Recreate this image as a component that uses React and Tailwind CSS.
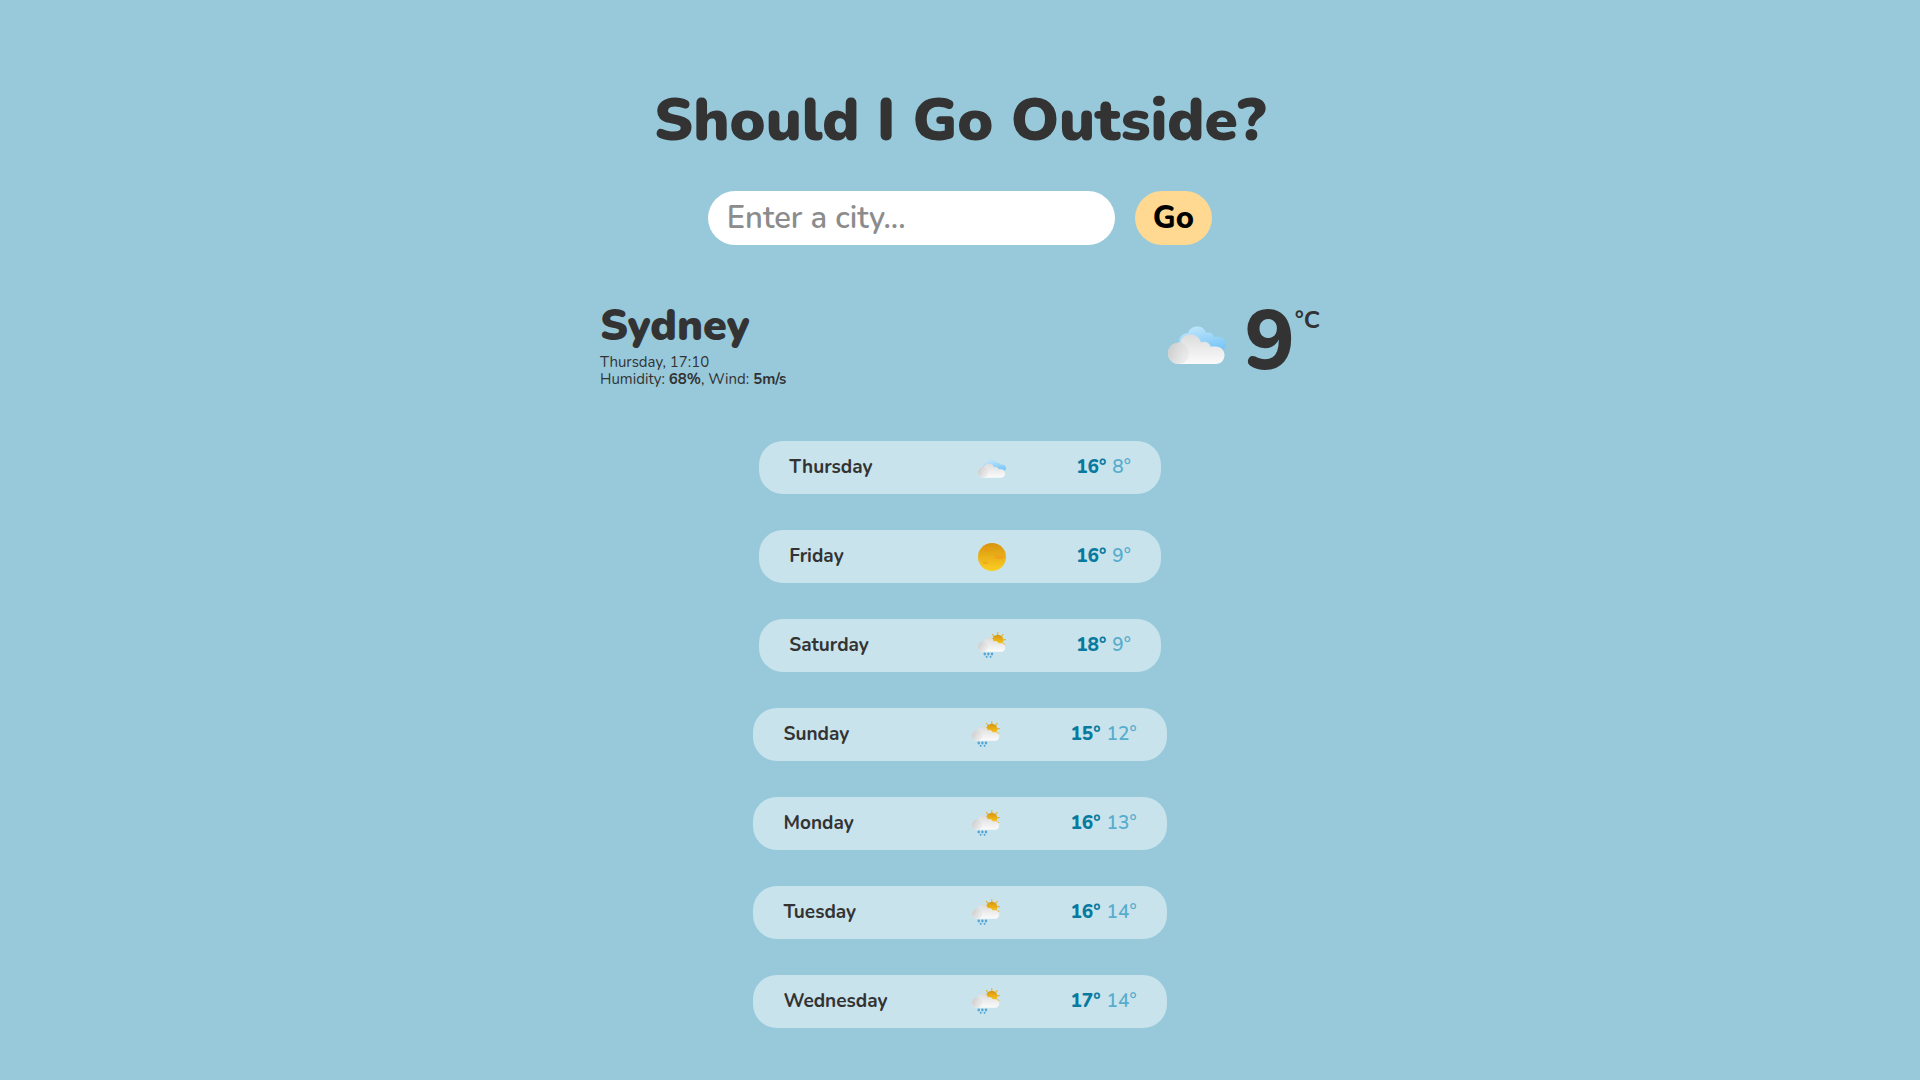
import React from "react";

const forecast = [
  { day: "Thursday", icon: "cloudy", high: 16, low: 8 },
  { day: "Friday", icon: "sunny", high: 16, low: 9 },
  { day: "Saturday", icon: "showers", high: 18, low: 9 },
  { day: "Sunday", icon: "showers", high: 15, low: 12 },
  { day: "Monday", icon: "showers", high: 16, low: 13 },
  { day: "Tuesday", icon: "showers", high: 16, low: 14 },
  { day: "Wednesday", icon: "showers", high: 17, low: 14 },
];

function Gradients() {
  return (
    <svg className="absolute size-0" aria-hidden="true">
      <defs>
        <linearGradient id="cloud" x1="0" y1="0" x2="0" y2="1">
          <stop offset="0" stopColor="#dcdcdc" />
          <stop offset="1" stopColor="#fbfbfb" />
        </linearGradient>
        <linearGradient id="puff" x1="0" y1="0.3" x2="1" y2="0.6">
          <stop offset="0" stopColor="#cccccc" />
          <stop offset="1" stopColor="#e2e2e2" stopOpacity="0.4" />
        </linearGradient>
        <linearGradient id="backCloud" x1="0.3" y1="0" x2="0.7" y2="1">
          <stop offset="0" stopColor="#bfe5fb" />
          <stop offset="1" stopColor="#72c3f7" />
        </linearGradient>
        <linearGradient id="sun" x1="0" y1="0" x2="0" y2="1">
          <stop offset="0" stopColor="#d8940f" />
          <stop offset="1" stopColor="#fccf23" />
        </linearGradient>
      </defs>
    </svg>
  );
}

function FrontCloud() {
  return (
    <>
      <path
        d="M11 57C4.500 57 0 52 0 46.500C0 40 5 35.500 12.500 35.500C13 31 17 27.500 22.500 27.500C28 27.500 31.500 31 33 35.500C37 33.500 41.500 35.500 42.500 39.500H48C53 39.500 56.500 43.500 56.500 48C56.500 53 53 57 48 57Z"
        fill="url(#cloud)"
      />
      <path
        d="M11 57C4.500 57 0 52 0 46.500C0 40 5 35.500 11 35.500C17 35.500 21 40.500 21 46.500C21 52 17 57 11 57Z"
        fill="url(#puff)"
      />
    </>
  );
}

function WeatherIcon({ kind, className }) {
  if (kind === "sunny") {
    return (
      <svg viewBox="0 0 58 58" className={className} role="img" aria-label="Sunny">
        <circle cx="29" cy="29" r="29" fill="url(#sun)" />
        <rect x="12" y="11" width="13" height="6" rx="3" fill="#eb9b13" />
        <rect x="35" y="25" width="19" height="8" rx="4" fill="#f0a21a" />
        <rect x="10" y="39" width="10" height="4" rx="2" fill="#f0a51a" />
      </svg>
    );
  }
  if (kind === "cloudy") {
    return (
      <svg viewBox="0 8 58 58" className={className} role="img" aria-label="Cloudy">
        <path
          d="M12 40C8 32 14 26 20 26C21 22 25 19.500 29.500 19.500C34 19.500 37 22 38 26C41.500 24.500 45.500 26.500 46 30C53 28.500 58 32 58 37C58 41 55 44 52 44L18 46Z"
          fill="url(#backCloud)"
        />
        <FrontCloud />
      </svg>
    );
  }
  return (
    <svg viewBox="0 8 58 58" className={className} role="img" aria-label="Sunny spells with showers">
      <g stroke="#e8b53c" strokeWidth="2.500" strokeLinecap="round">
        <path d="M41 9v5M30 13l3 4M52 13l-3 4M26 21l4 2M57 24h-5M55 34l-4-2" />
      </g>
      <circle cx="41" cy="25" r="11.500" fill="url(#sun)" />
      <g transform="translate(0 -8)">
        <FrontCloud />
      </g>
      <g fill="#52a6d4">
        <ellipse cx="14" cy="53.500" rx="2.600" ry="3" />
        <ellipse cx="21.500" cy="53.500" rx="2.600" ry="3" />
        <ellipse cx="29" cy="53.500" rx="2.600" ry="3" />
        <ellipse cx="18" cy="59.500" rx="2" ry="2.400" />
        <ellipse cx="26" cy="59.500" rx="2" ry="2.400" />
      </g>
    </svg>
  );
}

function ForecastRow({ day, icon, high, low }) {
  return (
    <li className="flex items-center rounded-3xl bg-[#c9e3ec] px-[30px] py-3 text-[19px] leading-[29px]">
      <span className="w-[189px] font-bold">{day}</span>
      <WeatherIcon kind={icon} className="size-7" />
      <span className="ml-[70px] flex gap-1.5">
        <strong className="font-extrabold text-[#077a9f]">{high}°</strong>
        <span className="font-semibold text-[#58adcd]">{low}°</span>
      </span>
    </li>
  );
}

export default function App() {
  return (
    <main className="flex min-h-screen flex-col items-center bg-[#97c9db] px-6 pt-20 pb-12 font-['Nunito','Open_Sans',sans-serif] text-[#333333]">
      <Gradients />
      <h1 className="text-center text-[60px] font-black leading-20">Should I Go Outside?</h1>

      <form className="mt-[31px] flex gap-5" onSubmit={(e) => e.preventDefault()}>
        <input
          type="text"
          aria-label="City"
          placeholder="Enter a city..."
          className="h-[54px] w-[407px] min-w-0 rounded-[27px] bg-white px-[19px] text-[31px] font-semibold text-black outline-none placeholder:text-[#8c8c8c]"
        />
        <button type="submit" className="h-[54px] rounded-[27px] bg-[#ffd991] px-[18px] text-[31px] font-extrabold text-black">
          Go
        </button>
      </form>

      <section className="mt-[55px] flex w-full max-w-[720px] items-start justify-between">
        <div>
          <h2 className="text-[43px] font-black leading-[52px]">Sydney</h2>
          <p className="mt-0.5 text-[15px] leading-[17px]">
            Thursday, 17:10
            <br />
            Humidity: <strong className="font-bold">68%</strong>, Wind: <strong className="font-bold">5m/s</strong>
          </p>
        </div>
        <div className="flex items-start">
          <WeatherIcon kind="cloudy" className="mt-[15px] mr-[18px] size-[58px]" />
          <span className="text-[84px] font-extrabold leading-[84px]">9</span>
          <span className="mt-1 text-2xl font-bold leading-8">°C</span>
        </div>
      </section>

      <ul className="mt-[53px] flex flex-col items-center gap-9">
        {forecast.map((item) => (
          <ForecastRow key={item.day} {...item} />
        ))}
      </ul>
    </main>
  );
}
